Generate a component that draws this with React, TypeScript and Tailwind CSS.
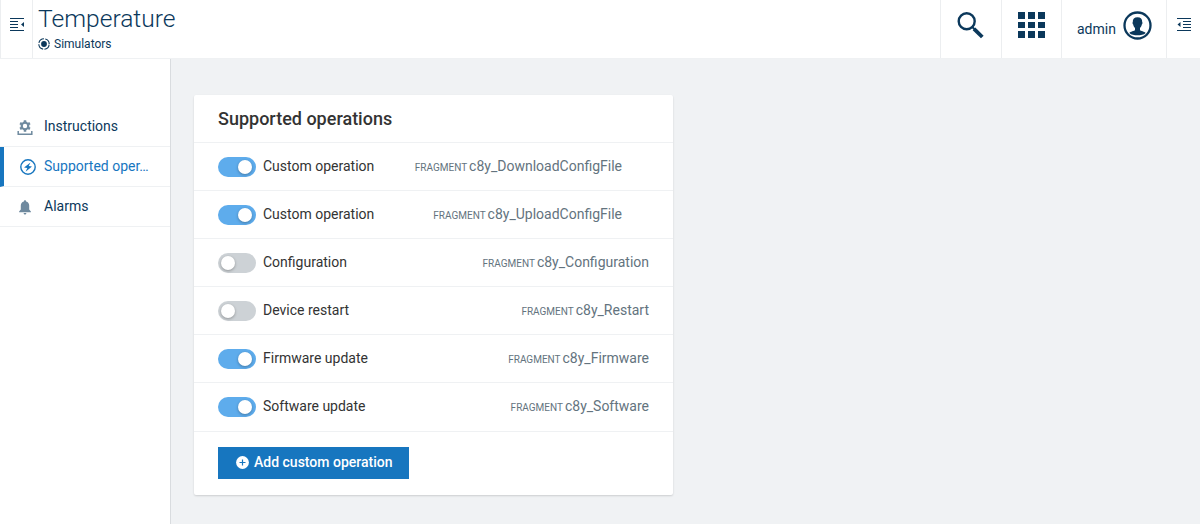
import type { ReactNode } from "react";

type Operation = { name: string; fragment: string; enabled: boolean; custom?: boolean };

const operations: Operation[] = [
  { name: "Custom operation", fragment: "c8y_DownloadConfigFile", enabled: true, custom: true },
  { name: "Custom operation", fragment: "c8y_UploadConfigFile", enabled: true, custom: true },
  { name: "Configuration", fragment: "c8y_Configuration", enabled: false },
  { name: "Device restart", fragment: "c8y_Restart", enabled: false },
  { name: "Firmware update", fragment: "c8y_Firmware", enabled: true },
  { name: "Software update", fragment: "c8y_Software", enabled: true },
];

function DrawerIcon() {
  return (
    <svg width="14" height="14" viewBox="0 0 14 14" fill="#0b385b" shapeRendering="crispEdges">
      <path d="M0 0h14v1H0zM0 3h8v1H0zM0 6h8v1H0zM0 9h8v1H0zM0 12h14v1H0z" />
      <path d="M14 4v5l-3-2.5z" shapeRendering="auto" />
    </svg>
  );
}

function DrawerRightIcon() {
  return (
    <svg width="14" height="14" viewBox="0 0 14 14" fill="#0b385b" shapeRendering="crispEdges">
      <path d="M0 0h14v1H0zM6 3h8v1H6zM6 6h8v1H6zM6 9h8v1H6zM0 12h14v1H0z" />
      <path d="M3.5 4v5l-3-2.5z" shapeRendering="auto" />
    </svg>
  );
}

function SimulatorIcon() {
  return (
    <svg width="12" height="12" viewBox="0 0 12 12" fill="none" stroke="#0b385b">
      <circle cx="6" cy="6" r="5.2" strokeWidth="1.1" strokeDasharray="6.8 1.37" strokeDashoffset="-0.7" />
      <circle cx="6" cy="6" r="2.9" fill="#0b385b" stroke="none" />
    </svg>
  );
}

function SearchIcon() {
  return (
    <svg width="27" height="27" viewBox="0 0 27 27" fill="none" stroke="#0b385b">
      <circle cx="9.7" cy="9.3" r="8" strokeWidth="2.4" />
      <path d="M15.5 15.2l2.2 2.2" strokeWidth="2" />
      <path d="M17 16.8l8.3 8.2" strokeWidth="3.8" />
    </svg>
  );
}

function AppsIcon() {
  return (
    <svg width="27" height="26" viewBox="0 0 27 26" fill="#0b385b">
      <path d="M0 0h7v7H0zM10 0h7v7h-7zM20 0h7v7h-7zM0 10h7v6H0zM10 10h7v6h-7zM20 10h7v6h-7zM0 19h7v7H0zM10 19h7v7h-7zM20 19h7v7h-7z" />
    </svg>
  );
}

function UserIcon() {
  return (
    <svg width="29" height="29" viewBox="0 0 29 29">
      <circle cx="14.5" cy="14.5" r="13" fill="none" stroke="#0b385b" strokeWidth="2.3" />
      <path
        d="M14.5 6.2c-3.2 0-4.9 1.9-4.7 4.8-.5.3-.3 2 .4 2.500.2 1.600.9 2.700 1.800 3.400v2c-.5 1.200-4.700 1.300-5.700 3.100 2 1.900 5 2.300 8.200 2.300s6.200-.4 8.200-2.300c-1-1.800-5.200-1.900-5.700-3.100v-2c.9-.7 1.600-1.800 1.800-3.400.7-.5.900-2.200.4-2.500.2-2.900-1.500-4.800-4.700-4.800z"
        fill="#0b385b"
      />
    </svg>
  );
}

function InstructionsIcon() {
  return (
    <svg width="16" height="16" viewBox="0 0 16 16" fill="none" stroke="#6f8a9f">
      <circle cx="8" cy="6" r="3.3" strokeWidth="2.2" />
      <path
        d="M8 .3v2M8 9.7v2M3.06 3.15l1.73 1M11.21 7.85l1.73 1M3.06 8.85l1.73-1M11.21 4.15l1.73-1"
        strokeWidth="2.5"
      />
      <path d="M1.2 11v3.3h13.6V11" strokeWidth="1.5" />
    </svg>
  );
}

function OperationIcon() {
  return (
    <svg width="16" height="16" viewBox="0 0 16 16">
      <circle cx="8" cy="8" r="7.2" fill="none" stroke="#1776bf" strokeWidth="1.4" />
      <path d="M10.5 3.4L4 8.5l3.3.5L5.6 12.700l6.400-5.200-3.300-.5z" fill="#1776bf" />
    </svg>
  );
}

function BellIcon() {
  return (
    <svg width="12" height="15" viewBox="0 0 12 15" fill="#6f8a9f">
      <path d="M6 .3c.7 0 1.100.4 1.100 1.100 2 .5 3.100 2.100 3.100 4.200v4l1.700 1.800v.9H.1v-.9l1.700-1.800v-4c0-2.100 1.100-3.700 3.100-4.200C4.900.7 5.300.3 6 .3zM4.600 13h2.800c0 .9-.6 1.500-1.400 1.500S4.600 13.900 4.600 13z" />
    </svg>
  );
}

function PlusIcon() {
  return (
    <svg width="13" height="13" viewBox="0 0 13 13">
      <circle cx="6.5" cy="6.5" r="6.4" fill="#fff" />
      <path d="M6.5 3.5v6M3.5 6.5h6" stroke="#1776bf" strokeWidth="1.2" />
    </svg>
  );
}

function NavItem({ icon, label, active = false }: { icon: ReactNode; label: string; active?: boolean }) {
  return (
    <a
      className={
        active
          ? "flex h-10 items-center border-b border-[#eff1f3] border-l-4 border-l-[#1776bf] text-[#1776bf]"
          : "flex h-10 items-center border-b border-[#eff1f3] text-[#0b385b]"
      }
    >
      <span className={active ? "flex w-10 shrink-0 justify-center pl-2" : "flex w-11 shrink-0 justify-center pt-0.5 pl-1.5"}>{icon}</span>
      <span className="pb-0.5 whitespace-nowrap">{label}</span>
    </a>
  );
}

function Toggle({ on }: { on: boolean }) {
  return (
    <span
      className={
        on
          ? "flex h-5 w-[38px] items-center justify-end rounded-full bg-[#5eacec] px-1"
          : "flex h-5 w-[38px] items-center rounded-full bg-[#cdd2d6] px-[3px]"
      }
    >
      <span className="size-3.5 rounded-full bg-white shadow-[0_1px_3px_rgba(0,0,0,0.3)]" />
    </span>
  );
}

function OperationRow({ op }: { op: Operation }) {
  return (
    <li className="flex h-12 items-center border-b border-[#eff1f3] px-6 last:h-[49px]">
      <Toggle on={op.enabled} />
      <span className="ml-[7px] pb-0.5 text-[#333]">{op.name}</span>
      <span className={op.custom ? "mr-[27px] ml-auto pb-0.5 text-[#63737e]" : "ml-auto pb-0.5 text-[#63737e]"}>
        <small className="-mr-[1.5px] text-[10px]">FRAGMENT</small> {op.fragment}
      </span>
    </li>
  );
}

export default function App() {
  return (
    <div className="flex h-[524px] w-[1200px] flex-col overflow-hidden bg-[#f0f2f4] font-['Roboto',sans-serif] text-sm text-[#0b385b]">
      <header className="flex h-[59px] shrink-0 border-b border-[#eff1f3] bg-white">
        <button className="flex w-[33px] items-start justify-center border-x border-[#eceef0] pt-[18px]">
          <DrawerIcon />
        </button>
        <div className="flex flex-1 flex-col pl-[5px]">
          <h1 className="mt-1 h-[30px] text-[24.6px] leading-[30px] font-light">Temperature</h1>
          <div className="mt-0.5 flex h-4 items-center gap-1 text-xs leading-4">
            <SimulatorIcon />
            <span>Simulators</span>
          </div>
        </div>
        <button className="flex w-[61px] justify-center border-l border-[#eceef0] pt-3 pr-px">
          <SearchIcon />
        </button>
        <button className="flex w-[60px] justify-center border-l border-[#eceef0] pt-3">
          <AppsIcon />
        </button>
        <button className="flex w-[105px] items-start border-l border-[#eceef0] pt-[11px] pl-[15px]">
          <span className="w-[46px] pt-2 text-left leading-5">admin</span>
          <UserIcon />
        </button>
        <button className="flex w-[34px] justify-center border-l border-[#eceef0] pt-[18px]">
          <DrawerRightIcon />
        </button>
      </header>
      <div className="flex flex-1">
        <nav className="w-[171px] border-r border-[#d9dcdf] bg-white pt-12">
          <NavItem icon={<InstructionsIcon />} label="Instructions" />
          <NavItem icon={<OperationIcon />} label="Supported oper…" active />
          <NavItem icon={<BellIcon />} label="Alarms" />
        </nav>
        <main className="pt-9 pl-[23px]">
          <section className="h-[400px] w-[479px] rounded-xs bg-white shadow-[0_1px_2px_rgba(0,0,0,0.15)]">
            <h2 className="flex h-12 items-center border-b border-[#eff1f3] px-6 text-lg font-medium text-[#333]">
              Supported operations
            </h2>
            <ul>
              {operations.map((op) => (
                <OperationRow key={op.fragment} op={op} />
              ))}
            </ul>
            <div className="px-6 pt-[15px]">
              <button className="flex h-8 w-[191px] items-center gap-[5px] bg-[#1776bf] pb-0.5 pl-[18px] font-medium text-white">
                <PlusIcon />
                <span>Add custom operation</span>
              </button>
            </div>
          </section>
        </main>
      </div>
    </div>
  );
}
